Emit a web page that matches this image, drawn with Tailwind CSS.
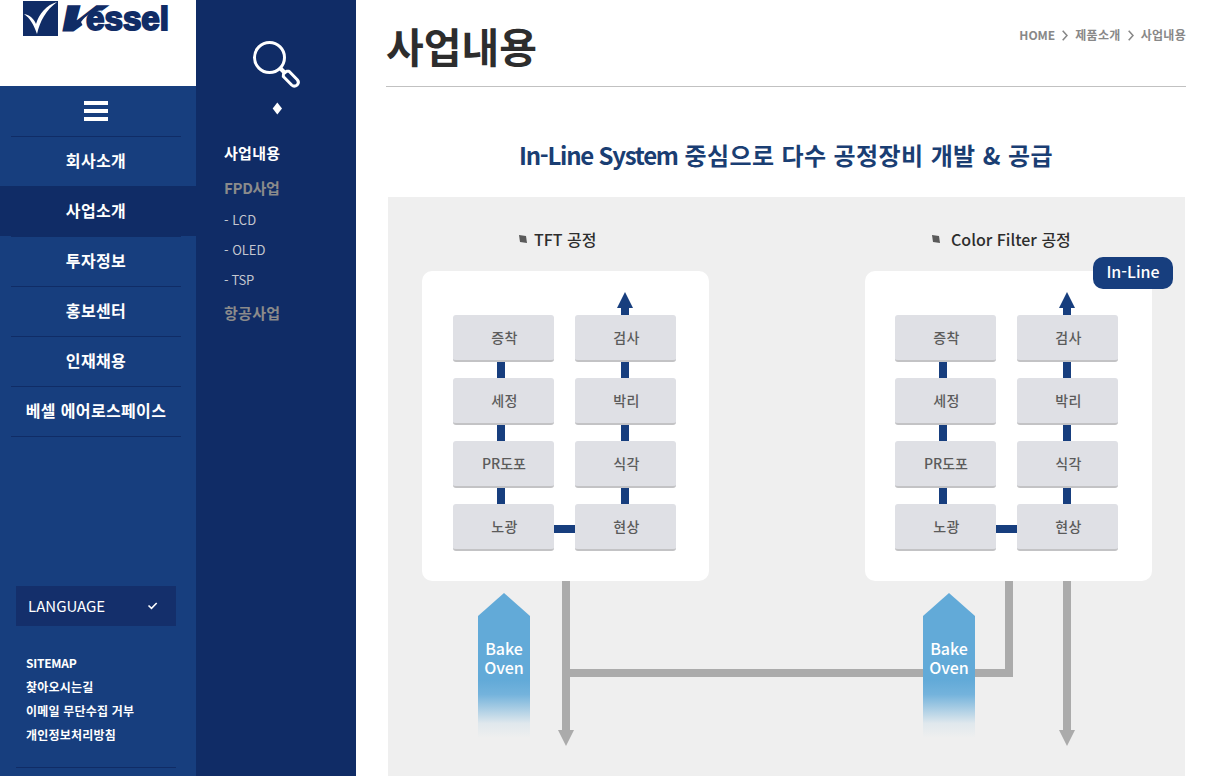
<!DOCTYPE html>
<html lang="ko">
<head>
  <meta charset="UTF-8">
  <meta name="viewport" content="width=device-width, initial-scale=1.0">
  <title>Vessel - 사업내용</title>
  <script src="https://cdn.jsdelivr.net/npm/@tailwindcss/browser@4"></script>
</head>
<body class="flex h-screen overflow-hidden bg-white font-['Noto_Sans_CJK_KR',sans-serif]">

  <!-- main menu -->
  <aside class="flex w-[196px] shrink-0 flex-col bg-[#173e7e] text-white">
    <div class="h-[86px] bg-white pl-[22px]">
      <svg class="block" width="150" height="40" viewBox="0 0 150 40" fill="#102c66">
        <rect x="1" y="1" width="35" height="35"/>
        <path d="M2 14C8 15 12 19 14 24C17 14 24 5 35 2C24 10 18 21 15 34C12 25 8 18 2 14Z" fill="#fff"/>
        <text transform="translate(29 29.500) skewX(-38)" font-family="Liberation Sans, sans-serif" font-size="34" font-weight="bold" textLength="36" lengthAdjust="spacingAndGlyphs" stroke="#102c66" stroke-width="3">V</text>
        <path d="M59 22C64 15 71 11 80 10.500L77 14C70 15 66 20 62 28Z" fill="#fff"/>
        <text x="64" y="29.500" font-family="Liberation Sans, sans-serif" font-size="33" font-weight="bold" textLength="83" lengthAdjust="spacingAndGlyphs" stroke="#102c66" stroke-width="2">essel</text>
      </svg>
    </div>
    <div class="flex h-[50px] flex-col items-center gap-1 pt-[15px] pr-1">
      <span class="h-1 w-6 bg-white"></span>
      <span class="h-1 w-6 bg-white"></span>
      <span class="h-1 w-6 bg-white"></span>
    </div>
    <nav class="text-center text-[16px] leading-[46px] font-bold tracking-[0.35px]">
      <a class="ml-[11px] mr-[15px] block h-[50px] border-t border-[#102c66]">회사소개</a>
      <a class="block h-[50px] bg-[#102c66] pt-px pr-1">사업소개</a>
      <a class="ml-[11px] mr-[15px] block h-[50px] border-t border-[#102c66]">투자정보</a>
      <a class="ml-[11px] mr-[15px] block h-[50px] border-t border-[#102c66]">홍보센터</a>
      <a class="ml-[11px] mr-[15px] block h-[50px] border-t border-[#102c66]">인재채용</a>
      <a class="ml-[11px] mr-[15px] block h-[51px] border-y border-[#102c66]">베셀 에어로스페이스</a>
    </nav>
    <div class="mx-4 mt-[149px] flex h-10 w-40 shrink-0 items-center justify-between bg-[#142f6b] pr-[18px] pl-3 text-[15px]">
      <span>LANGUAGE</span>
      <svg width="11" height="8" viewBox="0 0 11 8" fill="none" stroke="#fff" stroke-width="1.600"><path d="M1.500 3.500L4.500 6.300L9.700 1"/></svg>
    </div>
    <ul class="mt-[25px] pl-[26px] text-[12px] leading-6 font-bold">
      <li class="tracking-[-0.25px]">SITEMAP</li>
      <li class="tracking-[0.2px]">찾아오시는길</li>
      <li class="tracking-[0.2px]">이메일 무단수집 거부</li>
      <li class="tracking-[0.2px]">개인정보처리방침</li>
    </ul>
    <div class="mx-4 mt-5 w-40 border-t border-[#102c66]"></div>
  </aside>

  <!-- sub menu -->
  <aside class="w-[160px] shrink-0 bg-[#102c66] text-white">
    <svg class="mt-10 ml-14 block" width="50" height="76" viewBox="0 0 50 76" fill="none" stroke="#fff">
      <circle cx="17.500" cy="17.500" r="15" stroke-width="3"/>
      <path d="M28.500 28.500L32.500 32.500" stroke-width="4"/>
      <path d="M34.500 31.300L37 31.200L45.300 39.800Q47.500 42.500 45.300 44.800Q42.300 47.400 39.700 45L31.300 36.500L31.500 34Z" stroke-width="3" stroke-linejoin="round"/>
      <path d="M25.300 62.500L30 68.500L25.300 74.500L20.700 68.500Z" fill="#fff" stroke="none"/>
    </svg>
    <ul class="mt-[24px] pl-7 text-[13px] leading-[30px] text-[#c4c7cf]">
      <li class="h-[34px] text-[15px] leading-[26px] font-bold tracking-[0.3px] text-white">사업내용</li>
      <li class="h-[31px] text-[15px] leading-[27px] font-bold tracking-[-0.3px] text-[#8b8b8b]">FPD사업</li>
      <li>- LCD</li>
      <li>- OLED</li>
      <li class="tracking-[-0.3px]">- TSP</li>
      <li class="text-[15px] leading-[35px] font-bold tracking-[0.3px] text-[#8b8b8b]">항공사업</li>
    </ul>
  </aside>

  <main class="w-[830px] shrink-0 pl-[30px]">
    <header class="flex h-[87px] w-[800px] items-start justify-between border-b border-[#c1c1c1]">
      <h1 class="mt-[13px] text-[41px] leading-[64px] font-bold text-[#2d2d2d]">사업내용</h1>
      <p class="mt-[25px] flex items-center gap-[7px] text-[12px] leading-5 font-bold text-[#888]">
        <span>HOME</span>
        <svg width="6" height="11" viewBox="0 0 6 11" fill="none" stroke="#888" stroke-width="1.600"><path d="M.7.800L5 5.500L.7 10.200"/></svg>
        <span class="tracking-[0.3px]">제품소개</span>
        <svg width="6" height="11" viewBox="0 0 6 11" fill="none" stroke="#888" stroke-width="1.600"><path d="M.7.800L5 5.500L.7 10.200"/></svg>
        <span class="tracking-[0.3px]">사업내용</span>
      </p>
    </header>

    <h2 class="mt-[48px] w-[800px] text-center text-[24px] leading-[40px] font-bold whitespace-nowrap text-[#1a3e73]"><span class="tracking-[-1.25px]">In-Line System</span> <span class="tracking-[0.4px]">중심으로 다수 공정장비 개발 &amp; 공급</span></h2>

    <!-- process diagram -->
    <section class="relative mt-[22px] ml-[2px] h-[579px] w-[797px] bg-[#efefef] text-[#5b5b5b]">
      <h3 class="absolute top-[30px] left-[131px] flex items-center gap-[7px] text-[16px] leading-6 font-medium whitespace-nowrap text-[#2d2d2d]">
        <svg width="8" height="8" viewBox="0 0 8 8" fill="#5a5a5a"><path d="M0 0L7 1L8 8L1 7Z"/></svg><span>TFT 공정</span>
      </h3>
      <h3 class="absolute top-[30px] left-[544px] flex items-center gap-[11px] text-[16px] leading-6 font-medium whitespace-nowrap text-[#2d2d2d]">
        <svg width="8" height="8" viewBox="0 0 8 8" fill="#5a5a5a"><path d="M0 0L7 1L8 8L1 7Z"/></svg><span>Color Filter 공정</span>
      </h3>

      <div class="absolute top-[74px] left-[34px] grid h-[310px] w-[287px] auto-rows-[47px] grid-cols-[101px_101px] gap-x-[21px] gap-y-4 rounded-[10px] bg-white pt-11 pl-[31px] text-center text-[14px] leading-[45px] font-medium tracking-[0.4px]">
        <div class="rounded-[3px] border-b-2 border-[#c3c3c5] bg-[#dfe0e5] pl-0.5">증착</div>
        <div class="rounded-[3px] border-b-2 border-[#c3c3c5] bg-[#dfe0e5] pl-0.5">검사</div>
        <div class="rounded-[3px] border-b-2 border-[#c3c3c5] bg-[#dfe0e5] pl-0.5">세정</div>
        <div class="rounded-[3px] border-b-2 border-[#c3c3c5] bg-[#dfe0e5] pl-0.5">박리</div>
        <div class="rounded-[3px] border-b-2 border-[#c3c3c5] bg-[#dfe0e5] pl-px tracking-normal">PR도포</div>
        <div class="rounded-[3px] border-b-2 border-[#c3c3c5] bg-[#dfe0e5] pl-0.5">식각</div>
        <div class="rounded-[3px] border-b-2 border-[#c3c3c5] bg-[#dfe0e5] pl-0.5">노광</div>
        <div class="rounded-[3px] border-b-2 border-[#c3c3c5] bg-[#dfe0e5] pl-0.5">현상</div>
      </div>

      <div class="absolute top-[74px] left-[477px] grid h-[310px] w-[287px] auto-rows-[47px] grid-cols-[101px_101px] gap-x-[21px] gap-y-4 rounded-[10px] bg-white pt-11 pl-[30px] text-center text-[14px] leading-[45px] font-medium tracking-[0.4px]">
        <div class="rounded-[3px] border-b-2 border-[#c3c3c5] bg-[#dfe0e5] pl-0.5">증착</div>
        <div class="rounded-[3px] border-b-2 border-[#c3c3c5] bg-[#dfe0e5] pl-0.5">검사</div>
        <div class="rounded-[3px] border-b-2 border-[#c3c3c5] bg-[#dfe0e5] pl-0.5">세정</div>
        <div class="rounded-[3px] border-b-2 border-[#c3c3c5] bg-[#dfe0e5] pl-0.5">박리</div>
        <div class="rounded-[3px] border-b-2 border-[#c3c3c5] bg-[#dfe0e5] pl-px tracking-normal">PR도포</div>
        <div class="rounded-[3px] border-b-2 border-[#c3c3c5] bg-[#dfe0e5] pl-0.5">식각</div>
        <div class="rounded-[3px] border-b-2 border-[#c3c3c5] bg-[#dfe0e5] pl-0.5">노광</div>
        <div class="rounded-[3px] border-b-2 border-[#c3c3c5] bg-[#dfe0e5] pl-0.5">현상</div>
      </div>

      <svg class="absolute top-0 left-0" width="797" height="579" viewBox="0 0 797 579">
        <defs>
          <linearGradient id="fade" x1="0" y1="0" x2="0" y2="1">
            <stop offset="0.600" stop-color="#62aad8"/>
            <stop offset="0.700" stop-color="#74b3dc"/>
            <stop offset="0.820" stop-color="#b5d3e6"/>
            <stop offset="0.900" stop-color="#e0e8ed"/>
            <stop offset="1" stop-color="#efefef"/>
          </linearGradient>
        </defs>
        <!-- flow inside the cards -->
        <g fill="#173e7e">
          <path d="M109 165h8v16h-8zM109 228h8v16h-8zM109 291h8v16h-8zM166 328h21v8h-21z"/>
          <path d="M233 165h8v16h-8zM233 228h8v16h-8zM233 291h8v16h-8zM233 118v-7h-4l8-16l8 16h-4v7z"/>
          <path d="M551 165h8v16h-8zM551 228h8v16h-8zM551 291h8v16h-8zM608 328h21v8h-21z"/>
          <path d="M675 165h8v16h-8zM675 228h8v16h-8zM675 291h8v16h-8zM675 118v-7h-4l8-16l8 16h-4v7z"/>
        </g>
        <!-- flow out of the cards -->
        <g fill="#ababab">
          <path d="M174 384h8v149h4l-8 16l-8-16h4z"/>
          <path d="M675 384h8v149h4l-8 16l-8-16h4z"/>
          <path d="M182 472h435v-88h8v96h-443z"/>
        </g>
        <path d="M90 419l26-23l26 23v122h-52z" fill="url(#fade)"/>
        <path d="M535 419l26-23l26 23v122h-52z" fill="url(#fade)"/>
      </svg>

      <p class="absolute top-[442px] left-[90px] w-[52px] text-center text-[16px] leading-[19px] font-medium text-white">Bake<br>Oven</p>
      <p class="absolute top-[442px] left-[535px] w-[52px] text-center text-[16px] leading-[19px] font-medium text-white">Bake<br>Oven</p>
      <span class="absolute top-[60px] left-[705px] h-8 w-20 rounded-[10px] bg-[#173e7e] text-center text-[16px] leading-[29px] font-medium text-white">In-Line</span>
    </section>
  </main>

</body>
</html>
